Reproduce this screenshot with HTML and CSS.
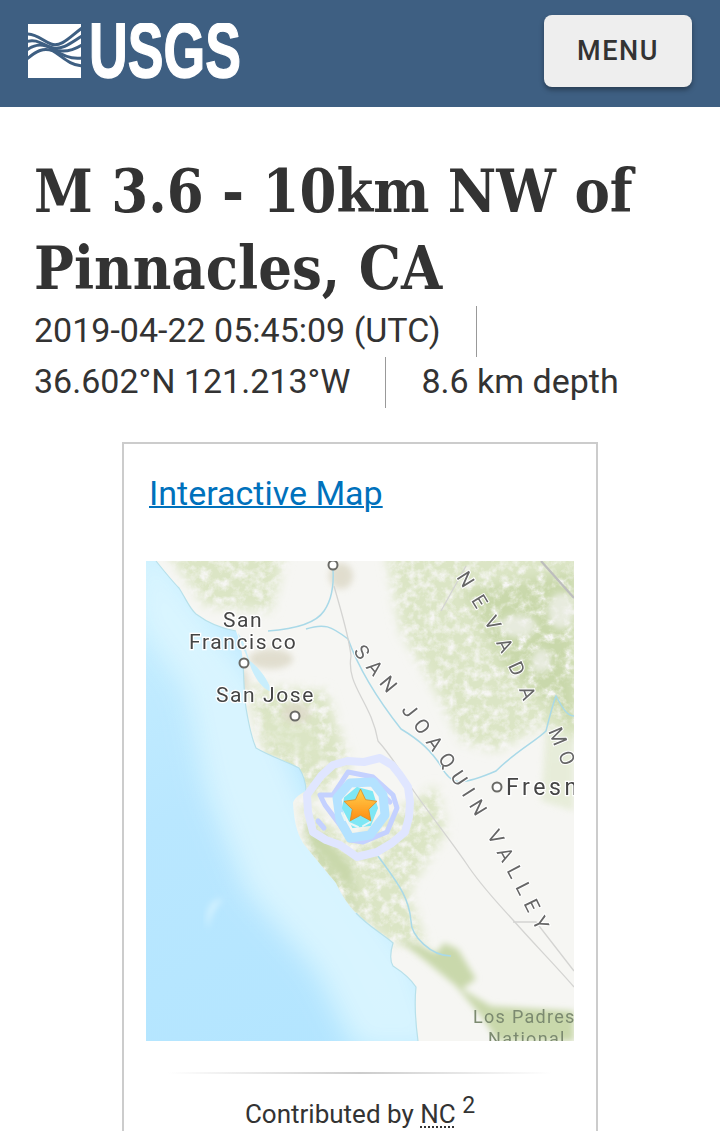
FILE: index.html
```html
<!DOCTYPE html>
<html lang="en">
<head>
<meta charset="utf-8">
<title>M 3.6 - 10km NW of Pinnacles, CA</title>
<link rel="stylesheet" href="styles.css">
</head>
<body>
<div class="page">
  <header class="site-header">
    <a class="logo" href="#" aria-label="USGS">
      <svg class="logo-svg" viewBox="0 0 214 56" width="214" height="56">
        <rect x="0" y="1" width="53" height="54" fill="#fff"/>
        <g fill="none" stroke="#3e5f82" stroke-width="3">
          <path d="M-1,11 C9,11 15,18 23,21 C33,25 43,13 54,5"/>
          <path d="M-1,18.500 C9,15 16,23 25,25 C35,27 44,19 54,13"/>
          <path d="M-1,27 C8,20 16,21 25,26 C34,30 44,28 54,22"/>
          <path d="M-1,36 C8,28 16,24 25,28 C34,33 41,42 54,43"/>
          <path d="M25,26 C32,31 42,37 54,35"/>
        </g>
        <text class="logo-text" x="61" y="54" textLength="152" lengthAdjust="spacingAndGlyphs">USGS</text>
      </svg>
    </a>
    <button class="menu-button" type="button">MENU</button>
  </header>

  <main class="content">
    <h1 class="title">M 3.6 - 10km NW of Pinnacles, CA</h1>
    <ul class="meta">
      <li class="meta-item">2019-04-22 05:45:09 (UTC)</li>
      <li class="meta-item">36.602°N 121.213°W</li>
      <li class="meta-item">8.6 km depth</li>
    </ul>

    <section class="card">
      <a class="card-link" href="#">Interactive Map</a>
      <svg class="map" viewBox="0 0 428 480" width="428" height="480" role="img" aria-label="Map of central California">
        <defs>
          <linearGradient id="sea" x1="0" y1="0" x2="0.5" y2="1">
            <stop offset="0" stop-color="#c6eeff"/>
            <stop offset="0.45" stop-color="#b9e7ff"/>
            <stop offset="1" stop-color="#b3e5ff"/>
          </linearGradient>
          <linearGradient id="star" x1="0" y1="0" x2="0" y2="1">
            <stop offset="0" stop-color="#ffd24e"/>
            <stop offset="1" stop-color="#ff8c12"/>
          </linearGradient>
          <filter id="soft" x="-30%" y="-30%" width="160%" height="160%"><feGaussianBlur stdDeviation="14"/></filter>
          <filter id="soft2" x="-20%" y="-20%" width="140%" height="140%"><feGaussianBlur stdDeviation="3"/></filter>
          <filter id="tiny" x="-2%" y="-2%" width="104%" height="104%"><feGaussianBlur stdDeviation="0.55"/></filter>
          <filter id="mottle" x="-10%" y="-10%" width="120%" height="120%">
            <feGaussianBlur in="SourceGraphic" stdDeviation="6" result="b"/>
            <feTurbulence type="fractalNoise" baseFrequency="0.11" numOctaves="4" seed="11" result="n"/>
            <feColorMatrix in="n" type="matrix" values="0 0 0 0 0 0 0 0 0 0 0 0 0 0 0 2.4 0 0 0 -0.45" result="a"/>
            <feComposite in="b" in2="a" operator="in"/>
          </filter>
          <clipPath id="land"><path d="M10,0 C18,10 28,22 33,27 C40,38 44,48 50,53 C62,62 78,68 90,70 C96,85 96,95 97,100 C98,120 98,135 100,147 C103,165 106,178 110,187 C125,196 140,200 153,207 C158,215 160,222 160,230 C152,234 148,238 147,242 C148,258 150,270 157,282 C168,296 180,310 190,322 C196,335 203,345 210,352 C222,365 238,374 247,382 C244,392 244,400 247,405 C258,412 266,420 270,426 C268,445 270,465 272,480 L428,480 L428,0 Z"/></clipPath>
        </defs>

        <g filter="url(#tiny)">
          <rect class="sea" x="-5" y="-5" width="440" height="490" fill="url(#sea)"/>
          <path class="sea-shelf" d="M-10,60 L40,130 L60,230 L100,330 L170,410 L210,490 L300,490 L270,400 L170,260 L110,120 L10,-10 L-10,-10 Z" filter="url(#soft)"/>
          <path class="sea-streak" d="M68,340 Q58,350 62,368 Q64,350 78,337 Z" filter="url(#soft2)"/>

          <path class="land" d="M10,0 C18,10 28,22 33,27 C40,38 44,48 50,53 C62,62 78,68 90,70 C96,85 96,95 97,100 C98,120 98,135 100,147 C103,165 106,178 110,187 C125,196 140,200 153,207 C158,215 160,222 160,230 C152,234 148,238 147,242 C148,258 150,270 157,282 C168,296 180,310 190,322 C196,335 203,345 210,352 C222,365 238,374 247,382 C244,392 244,400 247,405 C258,412 266,420 270,426 C268,445 270,465 272,480 L428,480 L428,0 Z"/>

          <g clip-path="url(#land)">
            <g class="pale" filter="url(#mottle)">
              <path d="M240,-10 L440,-10 L440,180 L395,165 L350,190 L315,180 L290,130 L255,70 Z"/>
              <path d="M20,-10 L140,-10 L125,50 L60,45 Z"/>
              <path d="M100,125 L180,130 L205,205 L170,240 L120,195 Z"/>
              <path d="M150,235 L205,280 L290,225 L300,270 L262,330 L280,385 L240,380 L190,325 Z"/>
            </g>
            <g class="pale" filter="url(#soft2)" opacity="0.55">
              <path d="M115,150 L165,165 L185,205 L145,195 L115,175 Z"/>
              <path d="M400,170 L428,160 L428,250 L395,240 Z"/>
            </g>
            <g class="mid" filter="url(#mottle)">
              <path d="M318,30 L428,10 L428,170 L400,140 L360,110 Z"/>
              <path d="M155,250 L210,340 L235,370 L205,350 L165,300 Z"/>
            </g>
            <g class="mid" filter="url(#soft2)">
              <path d="M160,262 L175,272 L205,305 L212,335 L195,318 L167,285 Z"/>
              <path d="M252,378 L268,382 L290,392 L298,382 L312,388 L330,418 L316,428 L345,445 L428,450 L428,480 L352,480 L335,455 L310,425 L282,402 Z"/>
            </g>
            <g class="snow" filter="url(#soft2)">
              <ellipse cx="415" cy="50" rx="13" ry="18"/>
              <ellipse cx="372" cy="65" rx="18" ry="11"/>
              <ellipse cx="395" cy="100" rx="9" ry="12"/>
            </g>
            <g class="urban" filter="url(#soft2)">
              <ellipse cx="150" cy="152" rx="14" ry="10"/>
              <ellipse cx="125" cy="98" rx="22" ry="10"/>
              <ellipse cx="195" cy="15" rx="12" ry="13"/>
              <ellipse cx="97" cy="120" rx="5" ry="12"/>
            </g>
          </g>

          <g class="coast">
            <path d="M10,0 C18,10 28,22 33,27 C40,38 44,48 50,53 C62,62 78,68 90,70 M97,100 C98,120 98,135 100,147 C103,165 106,178 110,187 C125,196 140,200 153,207 C158,215 160,222 160,230 M210,352 C222,365 238,374 247,382 C244,392 244,400 247,405 C258,412 266,420 270,426 C268,445 270,465 272,480"/>
            <path class="bay" d="M92,72 C100,82 100,92 104,100 C112,106 122,118 126,131 C116,128 108,116 104,104 C100,92 94,82 92,72 Z"/>
          </g>
          <g class="rivers">
            <path d="M187,8 C188,25 185,40 178,50 C170,62 150,68 122,70"/>
            <path d="M160,68 C178,62 185,65 202,78 C210,100 225,130 255,168 C275,180 285,190 295,205 C305,225 315,225 350,210 C370,190 390,180 400,170 C405,150 408,140 410,135 C418,150 422,155 428,155"/>
            <path d="M232,295 C250,320 263,335 265,360 C265,375 285,395 305,395"/>
          </g>
          <g class="roads">
            <path d="M188,25 C195,50 203,75 205,95 C200,125 225,140 232,180 C250,200 258,218 267,229 C285,255 305,280 320,302 C335,325 350,340 367,359 C390,385 410,405 428,426"/>
            <path d="M367,361 L390,361 L428,410"/>
            <path d="M295,50 L320,5"/>
            <path class="road-heavy" d="M395,0 L428,37"/>
          </g>

          <g class="labels">
            <text class="city" x="77" y="66">San</text>
            <text class="city" x="43" y="88">Francis<tspan dx="3">co</tspan></text>
            <text class="city" x="70" y="141">San Jose</text>
            <text class="city fresno" x="360" y="234">Fresno</text>
            <text class="city forest" x="327" y="462">Los Padres</text>
            <text class="city forest" x="342" y="484">National</text>
            <path id="valley" class="no-paint" d="M207,91 C252,148 322,218 400,390"/>
            <text class="region"><textPath href="#valley">SAN JOAQUIN VALLEY</textPath></text>
            <path id="nevada" class="no-paint" d="M310,16 C335,55 360,95 378,142"/>
            <text class="region nevada"><textPath href="#nevada">NEVADA</textPath></text>
            <path id="mono" class="no-paint" d="M402,170 L428,232"/>
            <text class="region"><textPath href="#mono">MO</textPath></text>
          </g>
          <g class="pins">
            <circle cx="98" cy="102" r="4.500"/>
            <circle cx="149" cy="155" r="4.500"/>
            <circle cx="187" cy="4" r="4.500"/>
            <circle cx="351" cy="226" r="4.500"/>
          </g>

          <g class="contours">
            <path class="c1" d="M161,234 L175,215 L187,204 L201,200 L218,201 L234,197 L246,204 L254,214 L262,226 L264,241 L263,256 L259,271 L246,282 L231,291 L211,296 L194,284 L180,279 L167,271 L162,251 Z"/>
            <path class="c2" d="M174,234 L187,234 L195,222 L202,211 L227,216 L247,234 L251,247 L241,271 L217,281 L204,279 L194,264 L179,244 Z"/>
            <path class="c2" d="M172,260 L178,267 M240,237 L244,241"/>
            <path class="c3" d="M191,237 L204,222 L227,221 L237,234 L239,254 L224,274 L204,277 L194,259 Z"/>
            <path class="c4" d="M199,237 L211,227 L226,231 L231,247 L224,264 L207,266 L197,247 Z"/>
            <path class="patch" d="M203,262 L212,266 M217,265 L224,261 M196,252 L199,259"/>
          </g>
          <path class="epicenter" d="M214.500,228 L219.600,238.700 L231,240.300 L222.700,248.300 L224.800,259.800 L214.500,254.300 L204.200,259.800 L206.300,248.300 L198,240.300 L209.400,238.700 Z" fill="url(#star)"/>
        </g>
      </svg>
      <hr class="rule">
      <p class="caption">Contributed by <abbr class="source" title="Northern California">NC</abbr> <sup class="ref">2</sup></p>
    </section>
  </main>
</div>
</body>
</html>
```

FILE: styles.css
```css
* { box-sizing: border-box; }
html, body { margin: 0; padding: 0; background: #fff; }
body { font-family: Roboto, "Liberation Sans", sans-serif; color: #333; }
.page { height: 1131px; overflow: hidden; }

.site-header {
  height: 107px;
  background: #3e5f82;
  display: flex;
  align-items: center;
  justify-content: space-between;
  padding: 0 28px;
}
.logo { display: block; height: 56px; margin-top: -5px; }
.logo-svg { display: block; }
.logo-text { font-family: "Liberation Sans", Arial, sans-serif; font-weight: 700; font-size: 77px; fill: #fff; stroke: #fff; stroke-width: 1.4px; }
.menu-button {
  width: 148px;
  height: 72px;
  margin-top: -5px;
  background: #eee;
  border: 0;
  border-radius: 8px;
  box-shadow: 0 3px 5px rgba(0, 0, 0, 0.35);
  font-family: Roboto, sans-serif;
  font-size: 27px;
  font-weight: 500;
  letter-spacing: 1.6px;
  color: #333;
}

.content { padding: 46px 34px 0; }
.title {
  margin: 0;
  font-family: "DejaVu Serif Condensed", "DejaVu Serif", serif;
  font-stretch: condensed;
  font-weight: 700;
  font-size: 59px;
  line-height: 77px;
  color: #333;
}
.meta { list-style: none; margin: -1px 0 0; padding: 0; display: flex; flex-wrap: wrap; font-size: 34px; line-height: 49px; color: #333; }
.meta-item { padding: 0 35px 2px 0; margin-right: 35px; border-right: 1px solid #999; }
.meta-item:last-child { border-right: 0; padding-right: 0; margin-right: 0; }

.card { width: 476px; margin: 34px 0 0 88px; border: 2px solid #ccc; border-bottom: 0; padding: 26px 22px 0; }
.card-link { display: block; margin-left: 3px; font-size: 34px; line-height: 46px; color: #0071bc; text-decoration: underline; text-decoration-thickness: 2px; }
.map { display: block; margin-top: 45px; }
.rule { height: 2px; margin: 31px 22px 0; border: 0; background: linear-gradient(to right, rgba(0,0,0,0), #ccc, rgba(0,0,0,0)); }
.caption { margin: 22px 0 0; font-size: 26px; line-height: 36px; text-align: center; color: #333; }
.source { text-decoration: underline dotted #333 2px; text-underline-offset: 3px; }
.ref { font-size: 23px; line-height: 0; }

.sea-shelf { fill: #dcf6ff; opacity: 0.9; }
.sea-streak { fill: #d6f3ff; }
.land { fill: #f6f6f3; }
.pale { fill: #dbe5c5; }
.mid { fill: #c9d8ab; }
.snow { fill: #f2f2ef; opacity: 0.75; }
.urban { fill: #dcd8c6; opacity: 0.8; }
.coast path { fill: none; stroke: #b7e0ea; stroke-width: 1.2; }
.coast .bay { fill: #c9eefc; stroke: none; }
.rivers path { fill: none; stroke: #a9d9e8; stroke-width: 1.5; }
.roads path { fill: none; stroke: #d4d4d2; stroke-width: 1.3; }
.roads .road-heavy { stroke: #bdbdbd; stroke-width: 2.2; }
.city { font-family: Roboto, sans-serif; font-size: 21px; letter-spacing: 1.6px; fill: #444; stroke: #fff; stroke-width: 2.5px; paint-order: stroke; }
.fresno { font-size: 23px; letter-spacing: 3.6px; }
.forest { font-size: 18px; letter-spacing: 1.3px; fill: #7b8a70; stroke: none; }
.region { font-family: Roboto, sans-serif; font-size: 20px; letter-spacing: 7.8px; fill: #666; stroke: #fff; stroke-width: 2px; paint-order: stroke; }
.nevada { letter-spacing: 13px; }
.no-paint { fill: none; stroke: none; }
.pins circle { fill: #fff; stroke: #6a6a66; stroke-width: 2; }
.contours path { fill: none; stroke-linejoin: round; stroke-linecap: round; }
.contours .c1 { stroke: #e0e6ff; stroke-width: 8; }
.contours .c2 { stroke: #c4d1ff; stroke-width: 5; }
.contours .c3 { stroke: #b4e2ff; stroke-width: 9; }
.contours .c4 { fill: #7fe7f5; stroke: #7fe7f5; stroke-width: 2; }
.contours .patch { stroke: #e6f6f6; stroke-width: 2; }
.epicenter { stroke: #e08a20; stroke-width: 0.8; stroke-linejoin: round; }
```
